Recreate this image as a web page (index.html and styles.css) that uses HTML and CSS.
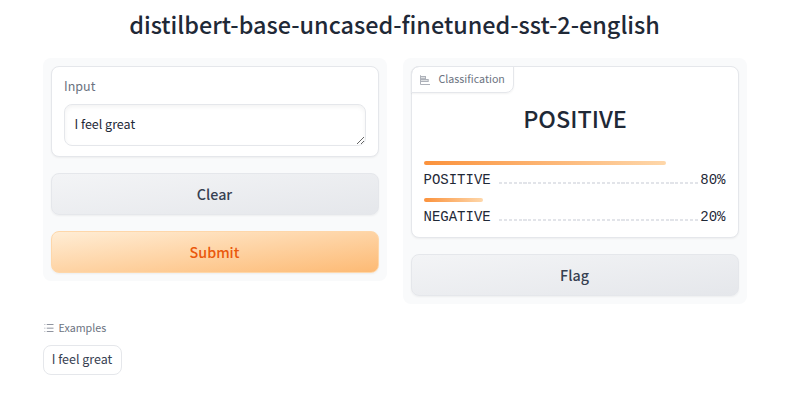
FILE: index.html
```html
<!DOCTYPE html>
<html lang="en">
<head>
<meta charset="utf-8">
<title>distilbert-base-uncased-finetuned-sst-2-english</title>
<link rel="stylesheet" href="styles.css">
</head>
<body>
<h1 class="title">distilbert-base-uncased-finetuned-sst-2-english</h1>
<main class="columns">
  <section class="panel">
    <div class="card input-card">
      <label class="input-label" for="text">Input</label>
      <textarea class="input" id="text" rows="1">I feel great</textarea>
    </div>
    <button class="button">Clear</button>
    <button class="button primary">Submit</button>
  </section>
  <section class="panel">
    <div class="card result-card">
      <div class="tag">
        <svg class="tag-icon" viewBox="0 0 30 30"><path fill="currentColor" fill-opacity=".4" d="M3 4h14v8H3zM3 12h22v8H3z"/><path fill="currentColor" d="M3 1H0v26a3 3 0 0 0 3 3h27v-3H3v-6h23v-9h-8V3H3Zm20 14v3H3v-3ZM15 6v4H3V6Z"/></svg>
        <span>Classification</span>
      </div>
      <h2 class="winner">POSITIVE</h2>
      <div class="row">
        <div class="bar" style="width: 80%"></div>
        <div class="line"><span>POSITIVE</span><i class="dots"></i><span>80%</span></div>
      </div>
      <div class="row">
        <div class="bar" style="width: 19.6%"></div>
        <div class="line"><span>NEGATIVE</span><i class="dots"></i><span>20%</span></div>
      </div>
    </div>
    <button class="button">Flag</button>
  </section>
</main>
<section class="examples">
  <div class="examples-head">
    <svg class="list-icon" viewBox="0 0 32 32"><path fill="currentColor" d="M10 6h18v2H10zm0 18h18v2H10zm0-9h18v2H10zm-6 0h2v2H4zm0-9h2v2H4zm0 18h2v2H4z"/></svg>
    <span>Examples</span>
  </div>
  <button class="example">I feel great</button>
</section>
</body>
</html>
```
FILE: styles.css
```css
* { box-sizing: border-box; margin: 0; }
body {
  padding: 0 51px 0 43px;
  background: #fff;
  color: #1f2937;
  font-family: "Noto Sans CJK SC", "Open Sans", sans-serif;
}
button, textarea { font-family: inherit; }
.title {
  height: 58px;
  padding-top: 6px;
  font-size: 23.4px;
  line-height: 36px;
  font-weight: 500;
  text-align: center;
  white-space: nowrap;
}
.columns { display: grid; grid-template-columns: 344px 344px; gap: 16px; align-items: start; }
.panel {
  display: flex;
  flex-direction: column;
  gap: 16px;
  padding: 8px;
  border-radius: 8px;
  background: #f9fafb;
}
.card {
  border: 1px solid #e5e7eb;
  border-radius: 8px;
  background: #fff;
  box-shadow: 0 1px 2px rgba(0, 0, 0, .05);
}
.input-card { height: 91px; padding: 9px 12px; }
.input-label { display: block; height: 28px; color: #6b7280; font-size: 12.5px; line-height: 20px; }
.input {
  display: block;
  width: 302px;
  height: 42px;
  padding: 9px 10px 11px 9.5px;
  border: 1px solid #e5e7eb;
  border-radius: 8px;
  background: #fff;
  color: #1f2937;
  font-size: 12.5px;
  line-height: 20px;
  box-shadow: inset 0 2px 4px rgba(0, 0, 0, .05);
  overflow: hidden;
  resize: vertical;
}
.button {
  height: 42px;
  padding: 0 1px 0 0;
  border: 1px solid #e5e7eb;
  border-radius: 8px;
  background: linear-gradient(to bottom right, #f3f4f6, #e5e7eb);
  color: #374151;
  font-size: 14.3px;
  font-weight: 500;
  line-height: 24px;
  box-shadow: 0 1px 2px rgba(0, 0, 0, .05);
}
.primary {
  border-color: #fed7aa;
  background: linear-gradient(to bottom right, #ffedd5, #fdba74);
  color: #ea580c;
}
.result-card { height: 172px; padding: 0 12px; }
.tag {
  display: flex;
  align-items: center;
  gap: 8.5px;
  width: 103px;
  height: 27px;
  margin: -1px 0 0 -13px;
  padding: 0 0 1px 8px;
  border: 1px solid #e5e7eb;
  border-radius: 8px 0 8px 0;
  color: #6b7280;
  font-size: 10.7px;
  line-height: 16px;
  box-shadow: 0 1px 2px rgba(0, 0, 0, .05);
}
.tag span { margin-top: -1px; }
.tag-icon { width: 10px; height: 10px; margin-top: 1px; opacity: .55; }
.winner {
  height: 68px;
  padding-top: 7px;
  font-size: 23.4px;
  font-weight: 500;
  line-height: 36px;
  text-align: center;
}
.row { height: 37px; }
.bar { height: 4px; border-radius: 4px; background: linear-gradient(to right, #fb923c, #fed7aa); }
.line {
  display: flex;
  align-items: center;
  height: 30px;
  margin-left: -.5px;
  margin-right: .5px;
  font: 14px/20px "Liberation Mono", monospace;
}
.dots {
  flex: 1;
  height: 2px;
  margin: 6px 0 0 8px;
  background: repeating-linear-gradient(to right, #e2e4e9 0 3px, transparent 3px 4.9px);
}
.examples { padding-top: 16px; }
.examples-head {
  display: flex;
  align-items: center;
  gap: 3.5px;
  height: 16px;
  color: #6b7280;
  font-size: 10.7px;
  line-height: 16px;
}
.list-icon { width: 12px; height: 12px; }
.example {
  display: block;
  width: 79px;
  height: 30px;
  margin-top: 9px;
  padding: 0 1px 2px 0;
  border: 1px solid #e5e7eb;
  border-radius: 8px;
  background: #fff;
  color: #374151;
  font-size: 12.5px;
  line-height: 20px;
}
```
